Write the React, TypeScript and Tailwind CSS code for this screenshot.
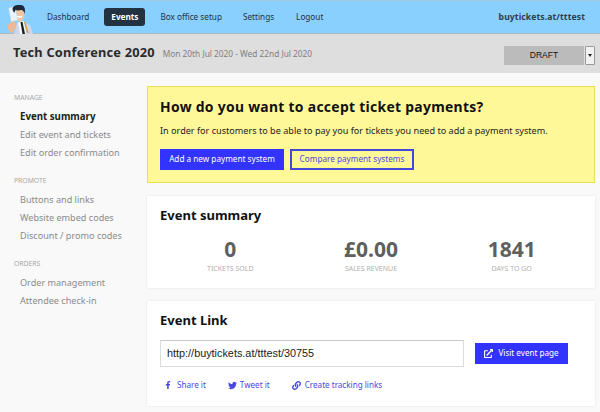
import { FaFacebookF, FaTwitter, FaLink, FaExternalLinkAlt } from 'react-icons/fa';

const menu = [
  { title: 'MANAGE', items: ['Event summary', 'Edit event and tickets', 'Edit order confirmation'] },
  { title: 'PROMOTE', items: ['Buttons and links', 'Website embed codes', 'Discount / promo codes'] },
  { title: 'ORDERS', items: ['Order management', 'Attendee check-in'] },
];

const stats = [
  { value: '0', label: 'TICKETS SOLD' },
  { value: '£0.00', label: 'SALES REVENUE' },
  { value: '1841', label: 'DAYS TO GO' },
];

function Mascot() {
  return (
    <svg width="27" height="30" viewBox="0 0 27 30" className="shrink-0 mt-[3px]">
      <path d="M7 30 L10 19 L15 17 L23 21 L26 30 Z" fill="#cfd4e8" />
      <path d="M11 18.500 L17 17 L19 30 L13 30 Z" fill="#f7f7f7" />
      <path d="M13.500 18 L15.500 18 L18 30 L15.500 30 Z" fill="#141c26" />
      <path d="M17 18 L18.500 18 L21.500 29 L20 29 Z" fill="#c9a63c" />
      <ellipse cx="12" cy="10" rx="5.500" ry="7.500" fill="#f3c6a0" />
      <path d="M1.500 4 L8 2 L11 16 L4 18 Z" fill="#e8f3fb" stroke="#a9c6da" strokeWidth="0.5" />
      <path d="M6 7 C4 2 9 0.500 13 1 C17 0.500 19 4 17.500 10 C17 7.500 16 6 14 6 C12 7 9 6 8 6.500 L7.500 9 Z" fill="#1d2a3a" />
      <path d="M9.500 12.500 Q12.500 15 15.500 12.500 L14.500 12 L10.500 12 Z" fill="#fff" />
      <path d="M0.500 21 L6 17 L9.500 20 L6 29 L2 28 Z" fill="#eeb995" />
    </svg>
  );
}

export default function App() {
  return (
    <div className="w-[600px] h-[412px] overflow-hidden bg-[#f9f9f9] font-['Noto_Sans','Open_Sans',sans-serif] text-[#333]">
      <header className="h-[34px] bg-[#8ad0ff] border-t border-b border-t-[#a5c9df] border-b-[#a9b9c4] flex items-center pl-[7px] pr-[15px]">
        <Mascot />
        <nav className="flex items-center ml-[13px] text-[8.200px] text-[#22313f]">
          <a>Dashboard</a>
          <a className="ml-[15px] w-[41px] h-[18px] flex items-center justify-center rounded-[3px] bg-[#223240] text-white font-bold">Events</a>
          <a className="ml-[15px]">Box office setup</a>
          <a className="ml-[21px]">Settings</a>
          <a className="ml-[22px]">Logout</a>
        </nav>
        <span className="ml-auto text-[8.600px] font-bold text-[#2e3d4a] tracking-[0.1px]">buytickets.at/tttest</span>
      </header>

      <div className="h-[39px] bg-[#dedede] flex items-center pl-[13px] pr-[5px]">
        <h1 className="-mt-[2px] text-[12.800px] font-bold text-[#2b2b2b] tracking-[0.2px]">Tech Conference 2020</h1>
        <span className="ml-[8px] mt-[2px] text-[8.300px] text-[#808080]">Mon 20th Jul 2020 - Wed 22nd Jul 2020</span>
        <div className="ml-auto mt-[3px] flex items-stretch h-[19px]">
          <div className="w-[80px] bg-[#bbbbbb] flex items-center justify-center text-[8.500px] text-[#111] font-['Liberation_Sans',sans-serif]">DRAFT</div>
          <div className="ml-[1px] w-[10px] bg-[#f2f2f2] border border-[#999] rounded-[1px] flex items-center justify-center">
            <span className="block w-0 h-0 border-l-[2.500px] border-r-[2.500px] border-t-[3px] border-l-transparent border-r-transparent border-t-[#222]" />
          </div>
        </div>
      </div>

      <div className="flex pt-[13px]">
        <aside className="w-[147px] shrink-0 pl-[14px] pt-[7px]">
          {menu.map((group) => (
            <div key={group.title} className="mb-[14px]">
              <div className="text-[6.800px] leading-[10px] text-[#a8a8a8] mb-[5px]">{group.title}</div>
              {group.items.map((item) => (
                <div
                  key={item}
                  className={`pl-[6px] leading-[18px] ${
                    item === 'Event summary' ? 'text-[9.700px] font-bold text-[#222]' : 'text-[9.100px] text-[#8a8a8a]'
                  }`}
                >
                  {item}
                </div>
              ))}
            </div>
          ))}
        </aside>

        <main className="flex-1 min-w-0 pr-[5px] flex flex-col gap-[13px]">
          <section className="h-[97px] bg-[#fff899] border border-[#eadf50] px-[12px] pt-[10px]">
            <h2 className="text-[13.900px] leading-[20px] font-bold text-[#111] tracking-[0.3px]">How do you want to accept ticket payments?</h2>
            <p className="mt-[7px] text-[9.100px] leading-[14px] text-[#222]">
              In order for customers to be able to pay you for tickets you need to add a payment system.
            </p>
            <div className="mt-[11px] flex gap-[6px]">
              <button className="h-[21px] w-[124px] bg-[#3333ff] text-white text-[8.200px]">Add a new payment system</button>
              <button className="h-[21px] w-[124px] border-2 border-[#4646d8] text-[#4a4ae0] text-[8.200px]">Compare payment systems</button>
            </div>
          </section>

          <section className="h-[92px] bg-white shadow-[0_0_2px_rgba(0,0,0,0.1)] px-[13px] pt-[10px]">
            <h2 className="text-[13px] leading-[18px] font-bold text-[#111]">Event summary</h2>
            <div className="mt-[12px] grid grid-cols-3">
              {stats.map((s) => (
                <div key={s.label} className="text-center">
                  <div className="text-[21px] leading-[27px] font-bold text-[#5f5f5f]">{s.value}</div>
                  <div className="text-[7px] leading-[12px] text-[#b0b0b0]">{s.label}</div>
                </div>
              ))}
            </div>
          </section>

          <section className="h-[105px] bg-white shadow-[0_0_2px_rgba(0,0,0,0.1)] px-[13px] pt-[10px]">
            <h2 className="text-[13px] leading-[18px] font-bold text-[#111]">Event Link</h2>
            <div className="mt-[11px] flex items-center">
              <div className="w-[304px] h-[27px] bg-white border border-[#dcdcdc] border-t-[#c8c8c8] flex items-center pl-[6px] font-['Liberation_Sans',sans-serif] text-[10.850px] text-[#222]">
                http://buytickets.at/tttest/30755
              </div>
              <button className="ml-[11px] h-[21px] w-[93px] bg-[#3333ff] text-white text-[8.100px] flex items-center justify-center gap-[5px]">
                <FaExternalLinkAlt size={9} />
                Visit event page
              </button>
            </div>
            <div className="mt-[12px] pl-[4px] flex items-center text-[8.100px] text-[#4a4ae0]">
              <FaFacebookF size={8} />
              <span className="ml-[5px]">Share it</span>
              <FaTwitter size={9} className="ml-[22px]" />
              <span className="ml-[3px]">Tweet it</span>
              <FaLink size={9} className="ml-[22px]" />
              <span className="ml-[4px]">Create tracking links</span>
            </div>
          </section>
        </main>
      </div>
    </div>
  );
}
